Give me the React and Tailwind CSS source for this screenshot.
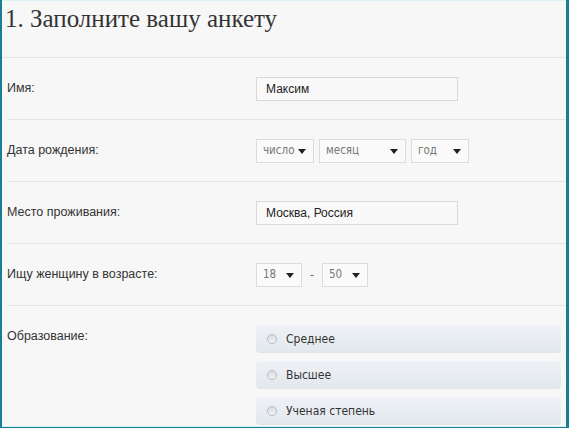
import React from "react";

const Caret = () => (
  <svg width="8" height="5" viewBox="0 0 8 5" className="shrink-0">
    <path d="M0 0h8L4 5z" fill="#222" />
  </svg>
);

const uiFont = '"DejaVu Sans Condensed", "DejaVu Sans", Tahoma, sans-serif';

const Select = ({ label, width }) => (
  <div
    className={`flex h-[24px] items-center justify-between border border-[#dcdcdc] bg-[#fafafa] pl-[6px] pr-[7px] text-[11.5px] text-[#777] ${width}`}
    style={{ fontFamily: uiFont }}
  >
    <span>{label}</span>
    <Caret />
  </div>
);

const TextInput = ({ value }) => (
  <div
    className="flex h-[24px] w-[202px] items-center border border-[#d8d8d8] bg-[#f9f9f9] px-[9px] text-[12px] text-[#222]"
    style={{ fontFamily: '"Liberation Sans", Arial, sans-serif' }}
  >
    {value}
  </div>
);

const Option = ({ label }) => (
  <div className="flex h-[27px] w-[305px] items-center rounded-[4px] bg-gradient-to-b from-[#eef2f6] to-[#e3e8ee] shadow-[0_1px_0_#dfe4ea]">
    <span className="ml-[11px] h-[10px] w-[10px] rounded-full border border-[#b8bcc0] bg-gradient-to-b from-[#d8dadc] to-[#f4f4f4]" />
    <span className="ml-[9px] text-[12px] text-[#333]" style={{ fontFamily: uiFont }}>
      {label}
    </span>
  </div>
);

const Row = ({ label, children, last }) => (
  <div className={`ml-[5px] flex pt-[19px] ${last ? "pb-0" : "pb-[18px] border-b border-[#e3e3e3]"}`}>
    <div className="w-[249px] shrink-0 text-[12.5px] leading-[22px] text-[#333]">{label}</div>
    <div className="flex flex-col gap-[9px]">{children}</div>
  </div>
);

export default function App() {
  return (
    <div
      className="h-[428px] w-[569px] overflow-hidden border-l-2 border-r-[3px] border-b border-[#1b7d91] bg-[#f7f7f7]"
      style={{ fontFamily: '"Liberation Sans", Arial, sans-serif' }}
    >
      <div className="h-full border-t border-b border-[#d6f3f6]">
        <div className="h-[57px] border-b border-[#e3e3e3] pl-[3px] pt-[3px]">
          <h1
            className="text-[25px] leading-[30px] text-[#333]"
            style={{ fontFamily: '"Liberation Serif", "DejaVu Serif", serif' }}
          >
            1. Заполните вашу анкету
          </h1>
        </div>

        <Row label="Имя:">
          <TextInput value="Максим" />
        </Row>

        <Row label="Дата рождения:">
          <div className="flex gap-[5px]">
            <Select label="число" width="w-[58px]" />
            <Select label="месяц" width="w-[87px]" />
            <Select label="год" width="w-[58px]" />
          </div>
        </Row>

        <Row label="Место проживания:">
          <TextInput value="Москва, Россия" />
        </Row>

        <Row label="Ищу женщину в возрасте:">
          <div className="flex items-center">
            <Select label="18" width="w-[46px]" />
            <span className="mx-[8px] text-[12px] text-[#666]">-</span>
            <Select label="50" width="w-[46px]" />
          </div>
        </Row>

        <Row label="Образование:" last>
          <Option label="Среднее" />
          <Option label="Высшее" />
          <Option label="Ученая степень" />
        </Row>
      </div>
    </div>
  );
}
